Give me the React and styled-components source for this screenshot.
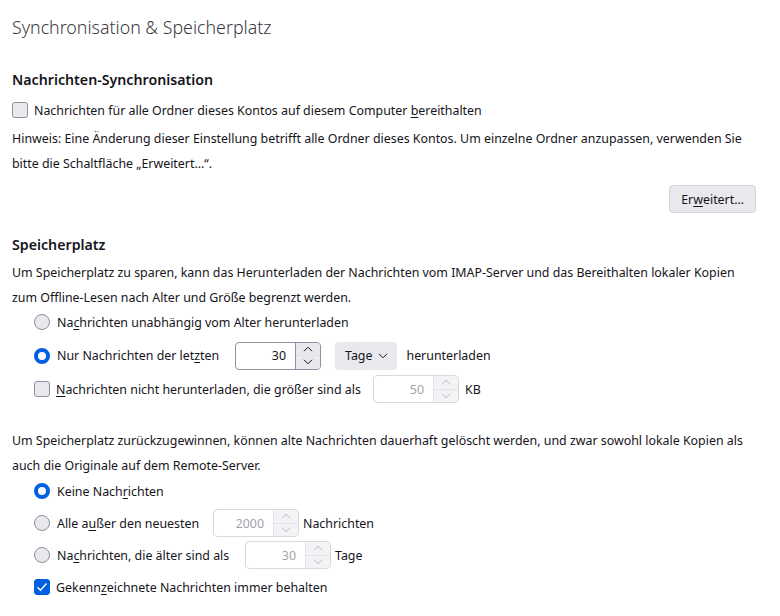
import React from "react";
import styled, { createGlobalStyle } from "styled-components";

const GlobalStyle = createGlobalStyle`
  body {
    margin: 0;
    background: #fff;
    color: #15141a;
    font-family: "Noto Sans", "Liberation Sans", sans-serif;
    font-size: 12.4px;
  }
`;

const Page = styled.div`
  width: 744px;
  padding: 12px 24px 0 12px;
`;

const Title = styled.h1`
  margin: 0;
  font-size: 17.8px;
  line-height: 30px;
  font-weight: 300;
  color: #3b3a42;
`;

const SectionTitle = styled.h2`
  margin: ${(p) => p.$top}px 0 0;
  font-size: 14.2px;
  line-height: 22px;
  font-weight: 600;
`;

const Paragraph = styled.p`
  margin: ${(p) => p.$top}px 0 0;
  line-height: 24.5px;
`;

const Row = styled.label`
  display: flex;
  align-items: center;
  height: 28px;
  margin-top: ${(p) => p.$top || 0}px;
  gap: 7px;
  white-space: nowrap;
`;

const OptionList = styled.div`
  display: flex;
  flex-direction: column;
  gap: ${(p) => p.$gap}px;
  margin-top: ${(p) => p.$top}px;
  padding-left: 22px;
`;

const LabelText = styled.span`
  min-width: ${(p) => p.$min || 0}px;
`;

const AccessKey = styled.u`
  text-decoration-thickness: 1px;
  text-underline-offset: 2px;
`;

const Box = styled.span`
  flex: none;
  width: 14px;
  height: 14px;
  margin-right: -1px;
  border-radius: 3px;
  border: 1px solid ${(p) => (p.$checked ? "#0061e0" : "#8f8f9d")};
  background: ${(p) => (p.$checked ? "#0061e0" : "#e9e9ed")};
  display: flex;
  align-items: center;
  justify-content: center;
`;

const Circle = styled.span`
  flex: none;
  box-sizing: border-box;
  width: 16px;
  height: 16px;
  border-radius: 50%;
  border: ${(p) => (p.$checked ? "4px solid #0061e0" : "1px solid #8f8f9d")};
  background: ${(p) => (p.$checked ? "#fff" : "#e9e9ed")};
`;

const ButtonRow = styled.div`
  display: flex;
  justify-content: flex-end;
  margin-top: 9px;
`;

const Button = styled.button`
  height: 28px;
  padding: 0 11px;
  border: 1px solid #d4d4d8;
  border-radius: 4px;
  background: #e9e9ed;
  color: #15141a;
  font: inherit;
`;

const Select = styled.span`
  display: flex;
  align-items: center;
  gap: 6px;
  height: 28px;
  margin-left: 7px;
  margin-right: 2px;
  padding: 0 9px 0 10px;
  border-radius: 4px;
  background: #e9e9ed;
`;

const SpinBox = styled.span`
  display: flex;
  height: 28px;
  box-sizing: border-box;
  width: 86px;
  border: 1px solid ${(p) => (p.$disabled ? "#d8d8de" : "#8f8f9d")};
  border-radius: 4px;
  background: #fff;
  overflow: hidden;
`;

const SpinValue = styled.span`
  flex: 1;
  display: flex;
  align-items: center;
  justify-content: flex-end;
  padding-right: 9px;
  color: ${(p) => (p.$disabled ? "#a3a3ab" : "#15141a")};
`;

const SpinButtons = styled.span`
  width: 24px;
  display: flex;
  flex-direction: column;
  border-left: 1px solid ${(p) => (p.$disabled ? "#e4e4e8" : "#8f8f9d")};
`;

const SpinButton = styled.span`
  flex: 1;
  display: flex;
  align-items: center;
  justify-content: center;
  background: ${(p) => (p.$disabled ? "#f3f3f5" : "#e9e9ed")};
  & + & {
    border-top: 1px solid ${(p) => (p.$disabled ? "#e4e4e8" : "#8f8f9d")};
  }
`;

const Unit = styled.span`
  margin-left: ${(p) => p.$gap}px;
`;

function Chevron({ up, color = "#15141a", size = 10 }) {
  return (
    <svg width={size} height={size * 0.6} viewBox="0 0 10 6">
      <path
        d={up ? "M1 5.2L5 1.2L9 5.2" : "M1 0.8L5 4.8L9 0.8"}
        fill="none"
        stroke={color}
        strokeWidth="1"
      />
    </svg>
  );
}

function Checkbox({ checked }) {
  return (
    <Box $checked={checked}>
      {checked && (
        <svg width="12" height="10" viewBox="0 0 12 10">
          <path d="M1.5 5.2L4.5 8.2L10.5 1.5" fill="none" stroke="#fff" strokeWidth="1.4" />
        </svg>
      )}
    </Box>
  );
}

function Spinner({ value, disabled }) {
  const c = disabled ? "#b8b8c0" : "#15141a";
  return (
    <SpinBox $disabled={disabled}>
      <SpinValue $disabled={disabled}>{value}</SpinValue>
      <SpinButtons $disabled={disabled}>
        <SpinButton $disabled={disabled}>
          <Chevron up color={c} />
        </SpinButton>
        <SpinButton $disabled={disabled}>
          <Chevron color={c} />
        </SpinButton>
      </SpinButtons>
    </SpinBox>
  );
}

export default function App() {
  return (
    <>
      <GlobalStyle />
      <Page>
        <Title>Synchronisation &amp; Speicherplatz</Title>

        <SectionTitle $top={27}>Nachrichten-Synchronisation</SectionTitle>
        <Row $top={5}>
          <Checkbox />
          <span>
            Nachrichten für alle Ordner dieses Kontos auf diesem Computer{" "}
            <AccessKey>b</AccessKey>ereithalten
          </span>
        </Row>
        <Paragraph $top={3}>
          Hinweis: Eine Änderung dieser Einstellung betrifft alle Ordner dieses Kontos. Um
          einzelne Ordner anzupassen, verwenden Sie bitte die Schaltfläche „Erweitert…“.
        </Paragraph>
        <ButtonRow>
          <Button>
            Er<AccessKey>w</AccessKey>eitert…
          </Button>
        </ButtonRow>

        <SectionTitle $top={21}>Speicherplatz</SectionTitle>
        <Paragraph $top={5}>
          Um Speicherplatz zu sparen, kann das Herunterladen der Nachrichten vom IMAP-Server
          und das Bereithalten lokaler Kopien zum Offline-Lesen nach Alter und Größe begrenzt
          werden.
        </Paragraph>
        <OptionList $top={-2} $gap={5.5}>
          <Row>
            <Circle />
            <span>
              Na<AccessKey>c</AccessKey>hrichten unabhängig vom Alter herunterladen
            </span>
          </Row>
          <Row>
            <Circle $checked />
            <LabelText $min={171}>
              Nur Nachrichten der let<AccessKey>z</AccessKey>ten
            </LabelText>
            <Spinner value="30" />
            <Select>
              Tage <Chevron size={10} />
            </Select>
            <span>herunterladen</span>
          </Row>
          <Row>
            <Checkbox />
            <LabelText $min={310}>
              <AccessKey>N</AccessKey>achrichten nicht herunterladen, die größer sind als
            </LabelText>
            <Spinner value="50" disabled />
            <Unit $gap={-1}>KB</Unit>
          </Row>
        </OptionList>

        <Paragraph $top={26}>
          Um Speicherplatz zurückzugewinnen, können alte Nachrichten dauerhaft gelöscht werden,
          und zwar sowohl lokale Kopien als auch die Originale auf dem Remote-Server.
        </Paragraph>
        <OptionList $top={-1} $gap={4}>
          <Row>
            <Circle $checked />
            <span>
              Keine Nach<AccessKey>r</AccessKey>ichten
            </span>
          </Row>
          <Row>
            <Circle />
            <LabelText $min={149}>
              Alle a<AccessKey>u</AccessKey>ßer den neuesten
            </LabelText>
            <Spinner value="2000" disabled />
            <Unit $gap={-3}>Nachrichten</Unit>
          </Row>
          <Row>
            <Circle />
            <LabelText $min={181}>
              Na<AccessKey>c</AccessKey>hrichten, die älter sind als
            </LabelText>
            <Spinner value="30" disabled />
            <Unit $gap={-3}>Tage</Unit>
          </Row>
          <Row>
            <Checkbox checked />
            <span>
              Gekenn<AccessKey>z</AccessKey>eichnete Nachrichten immer behalten
            </span>
          </Row>
        </OptionList>
      </Page>
    </>
  );
}
